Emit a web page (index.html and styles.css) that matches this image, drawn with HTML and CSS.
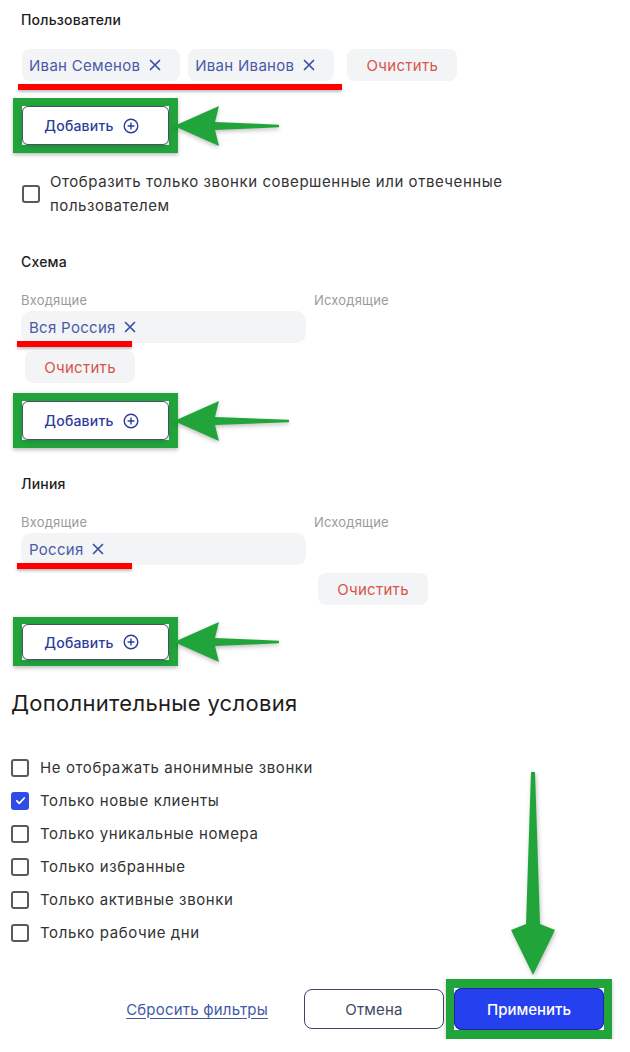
FILE: index.html
```html
<!DOCTYPE html>
<html lang="ru">
<head>
  <meta charset="UTF-8" />
  <title>Фильтры звонков</title>
  <link rel="stylesheet" href="styles.css">
</head>
<body>
  <div class="filters">

    <section class="group group--users">
      <h3 class="group-title">Пользователи</h3>
      <div class="tags">
        <span class="tag">Иван Семенов
          <svg class="tag-x" viewBox="0 0 12 12"><path d="M1.5 1.5l9 9M10.5 1.5l-9 9"/></svg>
        </span>
        <span class="tag">Иван Иванов
          <svg class="tag-x" viewBox="0 0 12 12"><path d="M1.5 1.5l9 9M10.5 1.5l-9 9"/></svg>
        </span>
        <button class="clear-btn clear-btn--inline">Очистить</button>
        <span class="mark mark--users"></span>
      </div>
      <div class="highlight highlight--add">
        <button class="add-btn">Добавить
          <svg class="plus" viewBox="0 0 16 16"><circle cx="8" cy="8" r="6.8"/><path d="M8 4.6v6.8M4.6 8h6.8"/></svg>
        </button>
        <svg class="arrow-left" viewBox="0 0 110 44"><polygon points="1,22 46,2 42,18 106,20.7 106,23.3 42,26 46,42"/></svg>
      </div>
      <label class="check check--wide">
        <span class="box"></span>
        <span class="check-text">Отобразить только звонки совершенные или отвеченные пользователем</span>
      </label>
    </section>

    <section class="group group--scheme">
      <h3 class="group-title">Схема</h3>
      <div class="direction">
        <span class="dir-label">Входящие</span>
        <span class="dir-label">Исходящие</span>
        <div class="dir-box">
          <span class="tag tag--plain">Вся Россия
            <svg class="tag-x" viewBox="0 0 12 12"><path d="M1.5 1.5l9 9M10.5 1.5l-9 9"/></svg>
          </span>
          <span class="mark mark--short"></span>
        </div>
        <div></div>
        <button class="clear-btn clear-btn--first">Очистить</button>
      </div>
      <div class="highlight highlight--add">
        <button class="add-btn">Добавить
          <svg class="plus" viewBox="0 0 16 16"><circle cx="8" cy="8" r="6.8"/><path d="M8 4.6v6.8M4.6 8h6.8"/></svg>
        </button>
        <svg class="arrow-left arrow-left--long" viewBox="0 0 120 44"><polygon points="1,22 46,2 42,18 116,20.7 116,23.3 42,26 46,42"/></svg>
      </div>
    </section>

    <section class="group group--line">
      <h3 class="group-title">Линия</h3>
      <div class="direction">
        <span class="dir-label">Входящие</span>
        <span class="dir-label">Исходящие</span>
        <div class="dir-box">
          <span class="tag tag--plain">Россия
            <svg class="tag-x" viewBox="0 0 12 12"><path d="M1.5 1.5l9 9M10.5 1.5l-9 9"/></svg>
          </span>
          <span class="mark mark--short"></span>
        </div>
        <div></div>
        <div></div>
        <button class="clear-btn clear-btn--second">Очистить</button>
      </div>
      <div class="highlight highlight--add highlight--low">
        <button class="add-btn add-btn--low">Добавить
          <svg class="plus" viewBox="0 0 16 16"><circle cx="8" cy="8" r="6.8"/><path d="M8 4.6v6.8M4.6 8h6.8"/></svg>
        </button>
        <svg class="arrow-left" viewBox="0 0 110 44"><polygon points="1,22 46,2 42,18 106,20.7 106,23.3 42,26 46,42"/></svg>
      </div>
    </section>

    <section class="extra">
      <h2 class="extra-title">Дополнительные условия</h2>
      <div class="extra-list">
        <label class="check"><span class="box"></span><span class="check-text">Не отображать анонимные звонки</span></label>
        <label class="check"><span class="box box--on"><svg viewBox="0 0 12 12"><path d="M2.6 6.3l2.3 2.3 4.6-4.9"/></svg></span><span class="check-text">Только новые клиенты</span></label>
        <label class="check"><span class="box"></span><span class="check-text">Только уникальные номера</span></label>
        <label class="check"><span class="box"></span><span class="check-text">Только избранные</span></label>
        <label class="check"><span class="box"></span><span class="check-text">Только активные звонки</span></label>
        <label class="check"><span class="box"></span><span class="check-text">Только рабочие дни</span></label>
      </div>
    </section>

    <footer class="actions">
      <a class="reset-link" href="#">Сбросить фильтры</a>
      <button class="cancel-btn">Отмена</button>
      <div class="highlight highlight--apply">
        <button class="apply-btn">Применить</button>
        <svg class="arrow-down" viewBox="0 0 48 207"><polygon points="24,205 2,160 17,154 22,2 26,2 31,154 46,160"/></svg>
      </div>
    </footer>

  </div>
</body>
</html>
```

FILE: styles.css
```css
* {
  box-sizing: border-box;
}

body {
  margin: 0;
  background: #fff;
  font-family: Inter, "Noto Sans", sans-serif;
  color: #2a2a2a;
}

button {
  font-family: inherit;
  cursor: pointer;
}

.filters {
  width: 630px;
}

/* groups */

.group {
  padding-left: 21px;
}

.group--users {
  padding-top: 10px;
}

.group--scheme {
  padding-top: 34px;
}

.group--line {
  padding-top: 26px;
}

.group-title {
  margin: 0;
  font-size: 14px;
  line-height: 20px;
  font-weight: 500;
  letter-spacing: 0.2px;
  color: #1d1d1d;
}

.tags {
  position: relative;
  display: flex;
  align-items: center;
  gap: 8px;
  margin-top: 19px;
  margin-left: 1px;
}

.tag {
  display: inline-flex;
  align-items: center;
  gap: 9px;
  height: 32px;
  padding: 0 19px 0 7px;
  background: #f3f4f6;
  border-radius: 8px;
  font-size: 15px;
  letter-spacing: 0.3px;
  color: #4a5aa8;
}

.tag--plain {
  background: none;
  padding: 0;
  gap: 8px;
}

.tag-x {
  width: 12px;
  height: 12px;
  fill: none;
  stroke: #3b4fa6;
  stroke-width: 1.7;
  stroke-linecap: round;
}

.clear-btn {
  height: 32px;
  width: 110px;
  border: none;
  border-radius: 8px;
  background: #f3f4f6;
  font-size: 15px;
  letter-spacing: 0.3px;
  color: #d5544c;
}

.clear-btn--inline {
  margin-left: 5px;
}

/* red underline annotations */

.mark {
  position: absolute;
  left: -4px;
  height: 6px;
  background: #f00;
  box-shadow: 0 2px 3px rgba(0, 0, 0, 0.25);
}

.mark--users {
  top: 35px;
  width: 324px;
}

.mark--short {
  top: 30px;
  width: 115px;
}

/* green highlight annotations */

.highlight {
  position: relative;
  display: inline-block;
  border: solid #21a53b;
  box-shadow: 0 2px 4px rgba(0, 0, 0, 0.25);
}

.highlight--add {
  display: flex;
  width: 165px;
  border-width: 8px 9px;
  margin-left: -8px;
  margin-top: 17px;
}

.group--scheme .highlight--add {
  margin-top: 10px;
}

.highlight--low {
  margin-top: 12px;
  border-width: 7px 9px 6px;
}

.add-btn {
  display: flex;
  align-items: center;
  justify-content: center;
  gap: 9px;
  width: 100%;
  height: 39px;
  border: 1px solid #4a5060;
  border-radius: 6px;
  background: #fff;
  box-shadow: 0 2px 4px rgba(40, 50, 90, 0.25);
  font-size: 14px;
  font-weight: 500;
  letter-spacing: 0.2px;
  color: #2c3c9c;
  padding-right: 14px;
}

.add-btn--low {
  height: 36px;
}

.plus {
  width: 16px;
  height: 16px;
  fill: none;
  stroke: #2c3c9c;
  stroke-width: 1.4;
}

.arrow-left {
  position: absolute;
  left: calc(100% + 4px);
  top: 50%;
  width: 110px;
  height: 44px;
  transform: translateY(-50%);
  fill: #21a53b;
  filter: drop-shadow(0 2px 2px rgba(0, 0, 0, 0.25));
}

.arrow-left--long {
  width: 120px;
}

/* checkbox */

.check {
  display: flex;
  align-items: center;
  gap: 10px;
  font-size: 15px;
  line-height: 24px;
  letter-spacing: 0.55px;
  color: #333;
}

.check--wide {
  margin-top: 17px;
  margin-left: 1px;
  width: 540px;
}

.box {
  flex: none;
  display: flex;
  align-items: center;
  justify-content: center;
  width: 18px;
  height: 18px;
  border: 2px solid #5a5a5a;
  border-radius: 3px;
}

.box--on {
  border: none;
  background: #2f4de6;
}

.box--on svg {
  width: 13px;
  height: 13px;
  fill: none;
  stroke: #fff;
  stroke-width: 1.6;
  stroke-linecap: round;
  stroke-linejoin: round;
}

/* incoming / outgoing columns */

.direction {
  display: grid;
  grid-template-columns: 285px 1fr;
  column-gap: 8px;
  margin-top: 20px;
}

.dir-label {
  font-size: 13px;
  line-height: 16px;
  letter-spacing: 0.2px;
  color: #9b9b9b;
}

.dir-box {
  position: relative;
  display: flex;
  align-items: center;
  height: 32px;
  margin-top: 3px;
  padding-left: 8px;
  background: #f3f4f6;
  border-radius: 10px;
}

.clear-btn--first {
  margin: 8px 0 0 4px;
}

.clear-btn--second {
  margin: 8px 0 0 4px;
}

/* extra conditions */

.extra {
  padding: 23px 0 0 11px;
}

.extra-title {
  margin: 0;
  font-size: 22px;
  line-height: 28px;
  font-weight: 400;
  letter-spacing: 0.3px;
  color: #1d1d1d;
}

.extra-list {
  display: flex;
  flex-direction: column;
  margin-top: 34px;
}

.extra-list .check {
  height: 33px;
  gap: 11px;
  letter-spacing: 0.6px;
}

/* footer */

.actions {
  display: flex;
  align-items: center;
  justify-content: flex-end;
  padding: 30px 18px 0 0;
}

.reset-link {
  font-size: 15px;
  letter-spacing: 0.2px;
  color: #4459a6;
  text-decoration: underline;
  text-underline-offset: 3px;
  margin-right: 36px;
}

.cancel-btn {
  width: 140px;
  height: 40px;
  border: 1px solid #3c4866;
  border-radius: 8px;
  background: #fff;
  font-size: 15px;
  letter-spacing: 0.2px;
  color: #3c4866;
  margin-right: 2px;
}

.highlight--apply {
  border-width: 9px 8px;
}

.apply-btn {
  display: block;
  width: 150px;
  height: 42px;
  border: none;
  border-radius: 8px;
  background: #2541ef;
  box-shadow: inset 0 0 0 1px #1a2a9a;
  font-size: 15px;
  font-weight: 500;
  color: #fff;
}

.arrow-down {
  position: absolute;
  left: 55px;
  bottom: calc(100% + 11px);
  width: 48px;
  height: 207px;
  fill: #21a53b;
  filter: drop-shadow(1px 2px 2px rgba(0, 0, 0, 0.25));
}
```
